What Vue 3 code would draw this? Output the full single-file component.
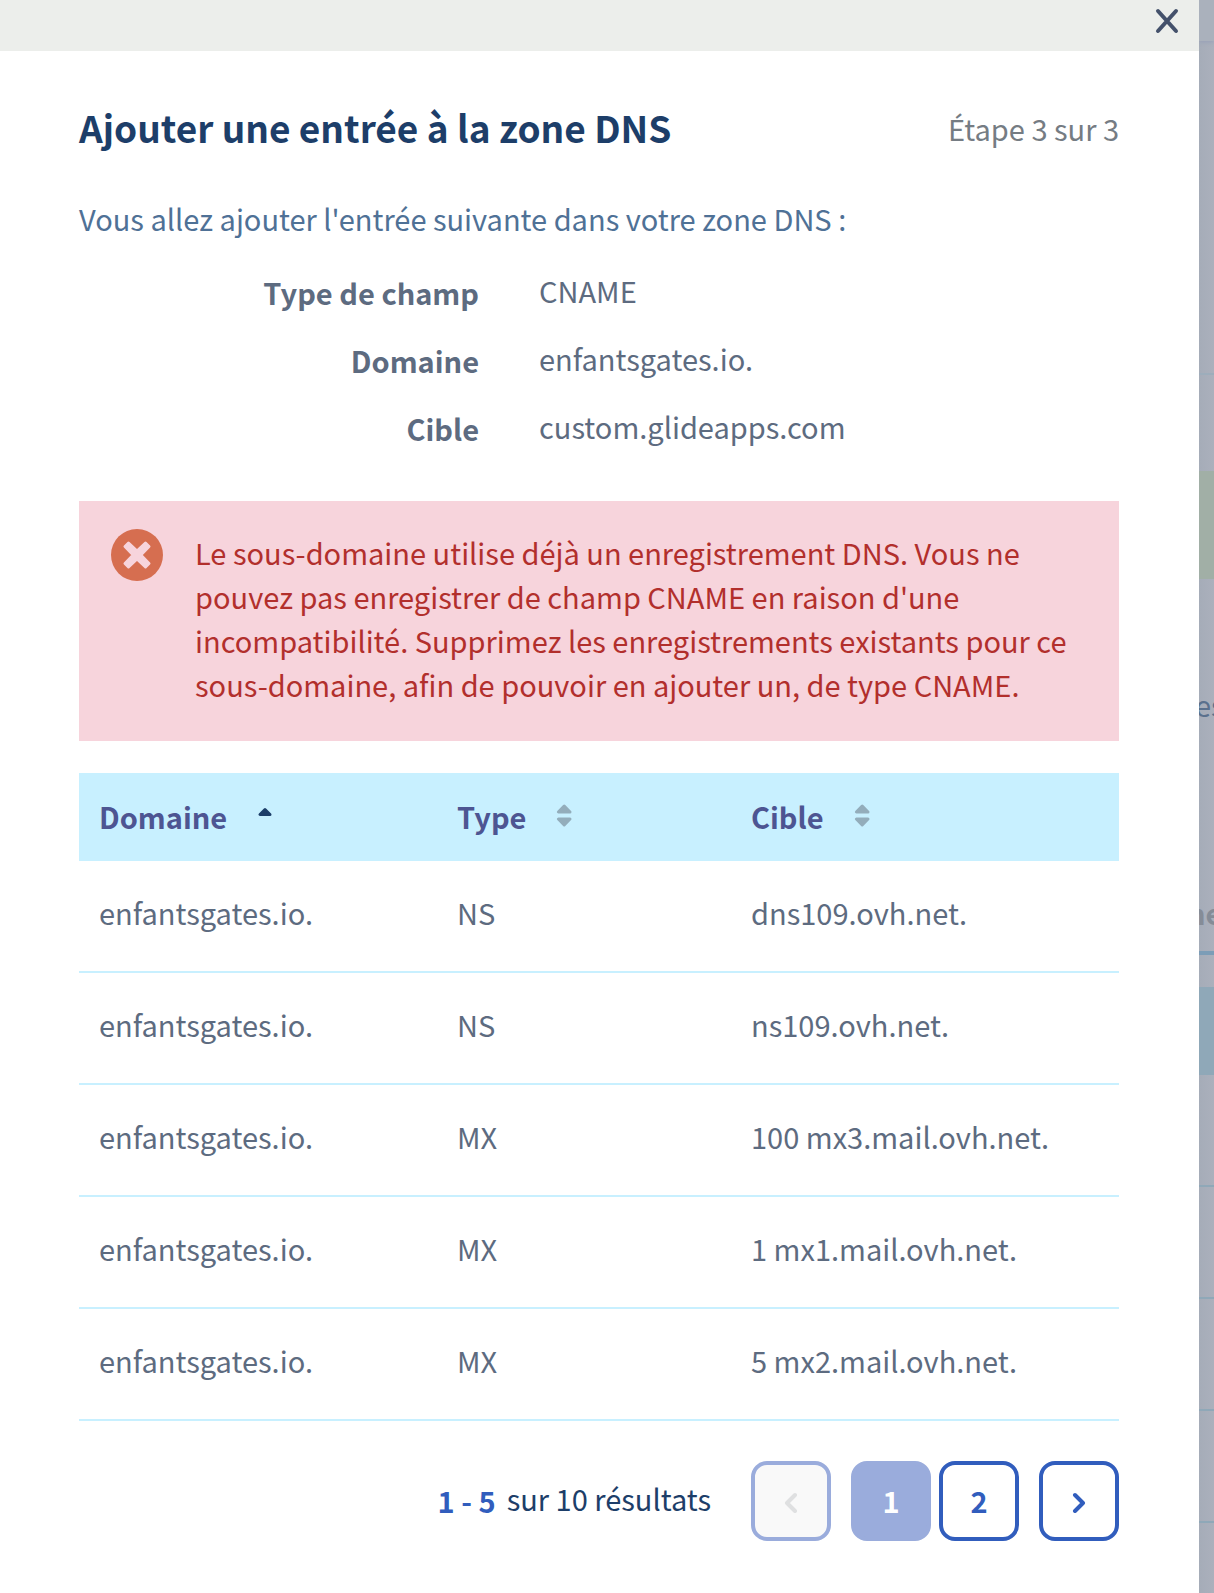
<script setup>
import { ref, computed } from 'vue'

const details = [
  { label: 'Type de champ', value: 'CNAME' },
  { label: 'Domaine', value: 'enfantsgates.io.' },
  { label: 'Cible', value: 'custom.glideapps.com' },
]

const columns = [
  { key: 'domain', label: 'Domaine', sorted: true },
  { key: 'type', label: 'Type', sorted: false },
  { key: 'target', label: 'Cible', sorted: false },
]

const records = [
  { domain: 'enfantsgates.io.', type: 'NS', target: 'dns109.ovh.net.' },
  { domain: 'enfantsgates.io.', type: 'NS', target: 'ns109.ovh.net.' },
  { domain: 'enfantsgates.io.', type: 'MX', target: '100 mx3.mail.ovh.net.' },
  { domain: 'enfantsgates.io.', type: 'MX', target: '1 mx1.mail.ovh.net.' },
  { domain: 'enfantsgates.io.', type: 'MX', target: '5 mx2.mail.ovh.net.' },
]

const page = ref(1)
const pages = [1, 2]
const isFirst = computed(() => page.value === 1)
const isLast = computed(() => page.value === pages.length)
</script>

<template>
  <div class="screen">
    <section class="modal" role="dialog" aria-labelledby="modal-title">
      <header class="modal-bar">
        <button class="close" type="button" aria-label="Fermer">
          <svg width="24" height="26" viewBox="0 0 24 26" aria-hidden="true">
            <path d="M3 3 L21 23 M21 3 L3 23" />
          </svg>
        </button>
      </header>

      <div class="modal-body">
        <div class="heading">
          <h1 id="modal-title">Ajouter une entrée à la zone DNS</h1>
          <span class="step">Étape 3 sur 3</span>
        </div>

        <p class="intro">Vous allez ajouter l'entrée suivante dans votre zone DNS :</p>

        <dl class="details">
          <template v-for="item in details" :key="item.label">
            <dt>{{ item.label }}</dt>
            <dd>{{ item.value }}</dd>
          </template>
        </dl>

        <div class="alert" role="alert">
          <svg class="alert-icon" width="52" height="52" viewBox="0 0 52 52" aria-hidden="true">
            <circle cx="26" cy="26" r="26" />
            <path
              d="M17.5 14 L26 22.2 L34.5 14 L38 17.5 L29.8 26 L38 34.5 L34.5 38 L26 29.8 L17.5 38 L14 34.5 L22.2 26 L14 17.5 Z"
            />
          </svg>
          <p>
            Le sous-domaine utilise déjà un enregistrement DNS. Vous ne pouvez pas enregistrer de
            champ CNAME en raison d'une incompatibilité. Supprimez les enregistrements existants
            pour ce sous-domaine, afin de pouvoir en ajouter un, de type CNAME.
          </p>
        </div>

        <table class="records">
          <colgroup>
            <col class="col-domain" />
            <col class="col-type" />
            <col />
          </colgroup>
          <thead>
            <tr>
              <th
                v-for="col in columns"
                :key="col.key"
                scope="col"
                :aria-sort="col.sorted ? 'ascending' : 'none'"
              >
                <button class="sort" type="button">
                  {{ col.label }}
                  <svg
                    v-if="col.sorted"
                    class="sort-icon sorted"
                    width="16"
                    height="26"
                    viewBox="0 0 16 26"
                    aria-hidden="true"
                  >
                    <path d="M3 11.5 H13 L8 6.6 Z" />
                  </svg>
                  <svg
                    v-else
                    class="sort-icon"
                    width="16"
                    height="26"
                    viewBox="0 0 16 26"
                    aria-hidden="true"
                  >
                    <path d="M2.4 9 H14 L8.2 3 Z M2.4 16 H14 L8.2 22 Z" />
                  </svg>
                </button>
              </th>
            </tr>
          </thead>
          <tbody>
            <tr v-for="record in records" :key="record.target">
              <td v-for="col in columns" :key="col.key">{{ record[col.key] }}</td>
            </tr>
          </tbody>
        </table>

        <nav class="pagination" aria-label="Pagination">
          <p class="summary"><strong>1 - 5</strong><span>sur 10 résultats</span></p>
          <button
            class="page-button"
            type="button"
            aria-label="Page précédente"
            :disabled="isFirst"
            @click="page--"
          >
            <svg width="14" height="22" viewBox="0 0 14 22" aria-hidden="true">
              <path d="M11 4 L3 12 L11 20" />
            </svg>
          </button>
          <div class="page-list">
            <button
              v-for="n in pages"
              :key="n"
              class="page-button"
              :class="{ current: n === page }"
              type="button"
              @click="page = n"
            >
              {{ n }}
            </button>
          </div>
          <button
            class="page-button"
            type="button"
            aria-label="Page suivante"
            :disabled="isLast"
            @click="page++"
          >
            <svg width="14" height="22" viewBox="0 0 14 22" aria-hidden="true">
              <path d="M3 4 L11 12 L3 20" />
            </svg>
          </button>
        </nav>
      </div>
    </section>

    <div class="underlay" aria-hidden="true">
      <div class="under-top"></div>
      <div class="under-tabs"></div>
      <div class="under-notice"></div>
      <div class="under-text">es</div>
      <div class="under-tab">ne</div>
      <div class="under-head"></div>
      <div v-for="n in 4" :key="n" class="under-row"></div>
    </div>
  </div>
</template>

<style>
body {
  margin: 0;
  background: #fff;
}
</style>

<style scoped>
.screen {
  display: flex;
  min-height: 100vh;
  font-family: 'Noto Sans CJK SC', 'Noto Sans', sans-serif;
  font-size: 29px;
  line-height: 44px;
  color: #5d6b80;
}

h1,
p,
dl,
dd {
  margin: 0;
}

button {
  margin: 0;
  padding: 0;
  border: 0;
  background: none;
  font: inherit;
  color: inherit;
  cursor: pointer;
}

.modal {
  flex: 1;
  min-width: 0;
  background: #fff;
}

.modal-bar {
  display: flex;
  justify-content: flex-end;
  align-items: flex-start;
  box-sizing: border-box;
  height: 51px;
  padding: 8px 20px 0 0;
  background: #eceeeb;
}

.close {
  display: flex;
}

.close path {
  fill: none;
  stroke: #44516b;
  stroke-width: 4;
  stroke-linecap: round;
}

.modal-body {
  padding: 50px 80px 52px 79px;
}

.heading {
  display: flex;
  justify-content: space-between;
  align-items: center;
}

.heading h1 {
  font-size: 37px;
  font-weight: 700;
  line-height: 52px;
  color: #1d3e69;
}

.step {
  padding-top: 2px;
  color: #757c83;
}

.intro {
  margin-top: 43px;
  color: #4f7196;
}

.details {
  display: grid;
  grid-template-columns: 20fr 29fr;
  gap: 22px 60px;
  margin-top: 28px;
}

.details dt {
  padding-top: 2px;
  font-weight: 700;
  text-align: right;
}

.alert {
  display: flex;
  align-items: flex-start;
  gap: 32px;
  margin-top: 51px;
  padding: 28px 32px 35px;
  background: #f7d4dc;
  color: #b22f2c;
}

.alert p {
  flex: 1;
  padding-top: 1px;
}

.alert-icon {
  flex: none;
}

.alert-icon circle {
  fill: #d66e50;
}

.alert-icon path {
  fill: #f7d4dc;
  stroke: #f7d4dc;
  stroke-width: 3;
  stroke-linejoin: round;
}

.records {
  width: 100%;
  margin-top: 32px;
  border-collapse: separate;
  border-spacing: 0;
  table-layout: fixed;
}

.col-domain {
  width: 358px;
}

.col-type {
  width: 294px;
}

.records th {
  padding: 21px 20px 23px;
  background: #c8f0ff;
  color: #4d5592;
  font-weight: 700;
  text-align: left;
}

.sort {
  display: flex;
  align-items: center;
  gap: 30px;
}

.sort-icon path {
  fill: #93adbb;
  stroke: #93adbb;
  stroke-width: 3;
  stroke-linejoin: round;
}

.sort-icon.sorted path {
  fill: #1d3e69;
  stroke: #1d3e69;
}

.records td {
  padding: 29px 20px 37px;
  border-bottom: 2px solid #c8f0ff;
}

.pagination {
  display: flex;
  justify-content: flex-end;
  align-items: center;
  gap: 20px;
  margin-top: 40px;
}

.summary {
  display: flex;
  gap: 11px;
  margin-right: 20px;
  padding-bottom: 2px;
  color: #1d3e69;
}

.summary strong {
  font-weight: 700;
  color: #315dbd;
}

.summary span {
  margin-top: -2px;
}

.page-list {
  display: flex;
  gap: 8px;
}

.page-button {
  display: flex;
  justify-content: center;
  align-items: center;
  box-sizing: border-box;
  width: 80px;
  height: 80px;
  padding-bottom: 2px;
  border: 4px solid #315dbd;
  border-radius: 16px;
  background: #fff;
  color: #315dbd;
  font-weight: 700;
}

.page-button svg {
  margin-top: 4px;
}

.page-button path {
  fill: none;
  stroke: currentColor;
  stroke-width: 4;
  stroke-linecap: round;
  stroke-linejoin: round;
}

.page-button:disabled {
  border-color: #9aacdc;
  background: #f9f9f9;
  color: #dfe0e1;
  cursor: default;
}

.page-button.current {
  border-color: #9aacdc;
  background: #9aacdc;
  color: #fff;
}

/* Dimmed page that stays visible beside the modal */
.underlay {
  flex: none;
  width: 15px;
  overflow: hidden;
  background: linear-gradient(90deg, #a5acb8, #abb0bc);
  white-space: nowrap;
}

.under-top {
  height: 41px;
  background: #aab1bc;
  box-shadow: 0 1px 4px #979fb8;
}

.under-tabs {
  height: 332px;
  border-bottom: 2px solid #9dadbb;
}

.under-notice {
  height: 108px;
  margin-top: 96px;
  background: #a1afa6;
}

.under-text {
  margin: 103px 0 0 -4px;
  color: #5a708d;
}

.under-tab {
  margin-top: 164px;
  padding-bottom: 17px;
  border-bottom: 4px solid #7c9db7;
  color: #858c97;
  font-weight: 700;
  text-indent: -12px;
}

.under-head {
  height: 88px;
  margin-top: 32px;
  background: #8fa8b8;
}

.under-row {
  height: 110px;
  border-bottom: 2px solid #8fa8b8;
}
</style>
